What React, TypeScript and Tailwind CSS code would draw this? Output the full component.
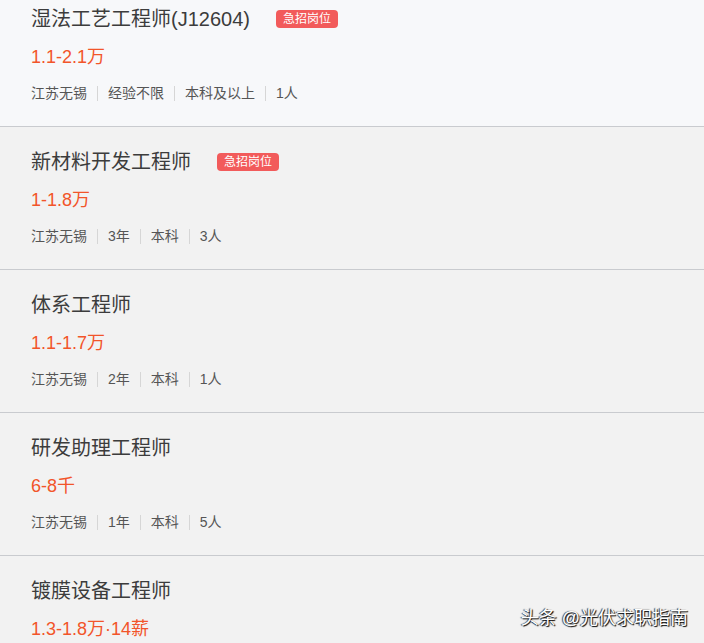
const jobs = [
  { title: '湿法工艺工程师(J12604)', urgent: true, salary: '1.1-2.1万', tags: ['江苏无锡', '经验不限', '本科及以上', '1人'] },
  { title: '新材料开发工程师', urgent: true, salary: '1-1.8万', tags: ['江苏无锡', '3年', '本科', '3人'] },
  { title: '体系工程师', urgent: false, salary: '1.1-1.7万', tags: ['江苏无锡', '2年', '本科', '1人'] },
  { title: '研发助理工程师', urgent: false, salary: '6-8千', tags: ['江苏无锡', '1年', '本科', '5人'] },
  { title: '镀膜设备工程师', urgent: false, salary: '1.3-1.8万·14薪', tags: ['江苏无锡', '3年', '本科', '2人'] },
];

export default function App() {
  return (
    <div
      className="relative h-[643px] w-[704px] overflow-hidden bg-[#f2f2f2]"
      style={{ fontFamily: '"Liberation Sans", "Noto Sans CJK SC", sans-serif' }}
    >
      <div className="-mt-[16px]">
        {jobs.map((job, i) => (
          <div
            key={job.title}
            className={`border-b border-[#c9cbcf] pl-[31px] pt-[21px] pb-[23px] ${i === 0 ? 'bg-[#f7f8fa]' : 'bg-[#f2f2f2]'}`}
          >
            <div className="flex h-[28px] items-center">
              <span className="text-[20px] leading-[28px] text-[#3c3c3c]">{job.title}</span>
              {job.urgent && (
                <span className="ml-[26px] flex h-[18px] items-center rounded-[4px] bg-[#f25b5b] px-[7px] text-[12px] leading-none text-white">
                  急招岗位
                </span>
              )}
            </div>
            <div className="mt-[12px] text-[18px] leading-[24px] text-[#f2552a]">{job.salary}</div>
            <div className="mt-[14px] flex h-[20px] items-center text-[14px] text-[#555]">
              {job.tags.map((t, j) => (
                <div key={j} className="flex items-center">
                  {j > 0 && <span className="mx-[10px] h-[15px] w-px bg-[#d6d6d6]" />}
                  <span>{t}</span>
                </div>
              ))}
            </div>
          </div>
        ))}
      </div>

      {/* 水印 */}
      <div
        className="absolute right-[16px] bottom-[16px] text-[18px] leading-none text-white"
        style={{ textShadow: '1px 1px 1px #000, -1px 0 1px #333' }}
      >
        头条 @光伏求职指南
      </div>
    </div>
  );
}
